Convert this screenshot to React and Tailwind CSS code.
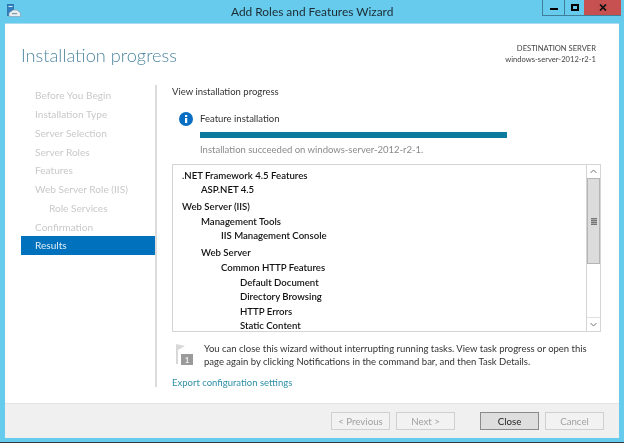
function Row({ indent = "", mt = "", children }) {
  return <div className={`h-[14.6px] leading-[14.6px] whitespace-nowrap ${indent} ${mt}`}>{children}</div>;
}
function Btn({ children, active, className = "" }) {
  return (
    <div className={`w-[59px] h-[18px] flex items-center justify-center border text-[9.7px] ${active ? "border-[#8a8a8a] bg-[#dedede] text-[#222] border-[1.5px]" : "border-[#d0d0d0] bg-[#f2f2f2] text-[#a0a0a0]"} ${className}`}>{children}</div>
  );
}
const nav = [
  ["Before You Begin", "pl-[14px]"],
  ["Installation Type", "pl-[14px]"],
  ["Server Selection", "pl-[14px]"],
  ["Server Roles", "pl-[14px]"],
  ["Features", "pl-[14px]"],
  ["Web Server Role (IIS)", "pl-[14px]"],
  ["Role Services", "pl-[28px]"],
  ["Confirmation", "pl-[14px]"],
];
export default function App() {
  return (
    <div className="w-[624px] h-[443px] bg-[#66cbec] flex flex-col overflow-hidden font-['Lato','Open_Sans',sans-serif] blur-[0.3px]">
      <div className="h-[23px] flex items-start shrink-0">
        <div className="w-[231px] pl-[7px] pt-[4px] shrink-0">
          <svg width="14" height="13" viewBox="0 0 14 13">
            <rect x="0.5" y="0.5" width="6" height="11" fill="#2f7fc0" stroke="#1d5f96" strokeWidth="0.6" />
            <rect x="1.5" y="2" width="4" height="1" fill="#d9eef8" />
            <path d="M2 9 L6 6 H10 L13.5 9 V12.5 H2 Z" fill="#e6eef2" stroke="#7f98a8" strokeWidth="0.6" />
            <rect x="5" y="9" width="5" height="1.2" fill="#7f98a8" />
          </svg>
        </div>
        <div className="w-[311px] text-[11.9px] leading-[23px] text-[#1c2a33] whitespace-nowrap shrink-0">Add Roles and Features Wizard</div>
        <div className="flex h-[16px] border-b border-[#3f7f98]">
          <div className="w-[22px] border-l border-[#3f7f98] flex items-center justify-center">
            <div className="w-[8px] h-[2px] mt-[2px] bg-black" />
          </div>
          <div className="w-[20px] border-l border-[#3f7f98] flex items-center justify-center">
            <div className="w-[8px] h-[7px] border-2 border-black" />
          </div>
          <div className="w-[37px] bg-[#c75050] flex items-center justify-center">
            <svg width="8" height="7" viewBox="0 0 8 7"><path d="M1 0.5 L7 6.5 M7 0.5 L1 6.5" stroke="#111" strokeWidth="1.7" /></svg>
          </div>
        </div>
      </div>

      <div className="mx-[5px] w-[614px] h-[414px] bg-white flex flex-col border-t border-[#a8dcee] shrink-0">
        <div className="h-[379px] relative shrink-0 flex flex-col">
          <div className="flex justify-between h-[60px] shrink-0">
            <div className="pl-[16px] pt-[17px] text-[18.2px] leading-[28px] font-light text-[#4f87a0] whitespace-nowrap">Installation progress</div>
            <div className="pr-[23px] pt-[19px] text-[7.6px] leading-[10.5px] text-[#444] text-right whitespace-nowrap">
              <div>DESTINATION SERVER</div>
              <div>windows-server-2012-r2-1</div>
            </div>
          </div>
          <div className="flex">
            <div className="w-[150px] pl-[16px] pt-[2px] shrink-0 text-[10.1px]">
              {nav.map(([label, pad]) => (
                <div key={label} className={`h-[18.85px] leading-[18.85px] text-[#c9c9c9] whitespace-nowrap ${pad}`}>{label}</div>
              ))}
              <div className="h-[18.5px] leading-[18.5px] mt-[-0.5px] bg-[#0071bc] text-[#dfeef8] pl-[14px]">Results</div>
            </div>
            <div className="w-[2px] h-[302px] bg-[#dcdcdc] shrink-0 mt-[1px]" />
            <div className="pl-[15px] flex-1 min-w-0 text-[9.5px]">
              <div className="h-[14px] leading-[14px] mt-[1px] text-[#333]">View installation progress</div>
              <div className="flex items-center h-[16px] mt-[12px]">
                <svg width="14" height="14" viewBox="0 0 14 14" className="ml-[7px] shrink-0">
                  <circle cx="7" cy="7" r="7" fill="#0a6fc2" />
                  <rect x="6" y="6" width="2.2" height="5" fill="#fff" />
                  <rect x="6" y="3" width="2.2" height="2" fill="#fff" />
                </svg>
                <span className="ml-[7px] text-[#333]">Feature installation</span>
              </div>
              <div className="ml-[28px] w-[307px] h-[6px] mt-[5px] bg-[#0b7a9c]" />
              <div className="ml-[28px] h-[14px] leading-[14px] mt-[5px] text-[#8a8a8a] whitespace-nowrap">Installation succeeded on windows-server-2012-r2-1.</div>
              <div className="w-[429px] h-[168px] mt-[7px] border border-[#d4d4d4] flex bg-white">
                <div className="flex-1 pl-[9px] pt-[3.5px] text-[#111] font-semibold text-[9.6px] overflow-hidden">
                  <Row>.NET Framework 4.5 Features</Row>
                  <Row indent="pl-[19px]">ASP.NET 4.5</Row>
                  <Row mt="mt-[2.5px]">Web Server (IIS)</Row>
                  <Row indent="pl-[19px]">Management Tools</Row>
                  <Row indent="pl-[39px]">IIS Management Console</Row>
                  <Row indent="pl-[19px]" mt="mt-[2.5px]">Web Server</Row>
                  <Row indent="pl-[39px]">Common HTTP Features</Row>
                  <Row indent="pl-[58px]">Default Document</Row>
                  <Row indent="pl-[58px]">Directory Browsing</Row>
                  <Row indent="pl-[58px]">HTTP Errors</Row>
                  <Row indent="pl-[58px]">Static Content</Row>
                </div>
                <div className="w-[14px] border-l border-[#d4d4d4] flex flex-col shrink-0">
                  <div className="h-[13px] flex items-center justify-center">
                    <svg width="7" height="5" viewBox="0 0 7 5"><path d="M0.5 4 L3.5 1 L6.5 4" fill="none" stroke="#777" strokeWidth="1" /></svg>
                  </div>
                  <div className="h-[86px] bg-[#dcdcdc] border border-[#b4b4b4] flex items-center justify-center">
                    <div className="w-[6px] h-[7px] bg-[repeating-linear-gradient(#777_0,#777_1px,#aaa_1px,#aaa_2px)]" />
                  </div>
                  <div className="flex-1" />
                  <div className="h-[14px] border-t border-[#e0e0e0] flex items-center justify-center">
                    <svg width="7" height="5" viewBox="0 0 7 5"><path d="M0.5 1 L3.5 4 L6.5 1" fill="none" stroke="#777" strokeWidth="1" /></svg>
                  </div>
                </div>
              </div>
              <div className="flex mt-[11px]">
                <svg width="18" height="22" viewBox="0 0 18 22" className="ml-[3px] shrink-0">
                  <path d="M1 1 L10 3 L3 7 V21 H1 Z" fill="#d8d8d8" />
                  <rect x="6" y="11" width="12" height="11" fill="#9a9a9a" />
                  <text x="12" y="20" textAnchor="middle" fontSize="8" fontWeight="700" fill="#eee">1</text>
                </svg>
                <div className="ml-[11px] text-[9.5px] leading-[13px] text-[#333] w-[392px] mt-[-1px]">
                  You can close this wizard without interrupting running tasks. View task progress or open this page again by clicking Notifications in the command bar, and then Task Details.
                </div>
              </div>
              <div className="h-[14px] leading-[14px] mt-[8px] text-[#2f8fa8]">Export configuration settings</div>
            </div>
          </div>
        </div>
        <div className="h-[35px] bg-[#f0f0f0] border-t border-[#e4e4e4] flex items-start pt-[8px] shrink-0">
          <Btn className="ml-[326px]">&lt; Previous</Btn>
          <Btn className="ml-[6px]">Next &gt;</Btn>
          <Btn active className="ml-[25px]">Close</Btn>
          <Btn className="ml-[6px]">Cancel</Btn>
        </div>
      </div>
      <div className="h-[5px] shrink-0" />
      <div className="flex-1 bg-[#2f3a40]" />
    </div>
  );
}
